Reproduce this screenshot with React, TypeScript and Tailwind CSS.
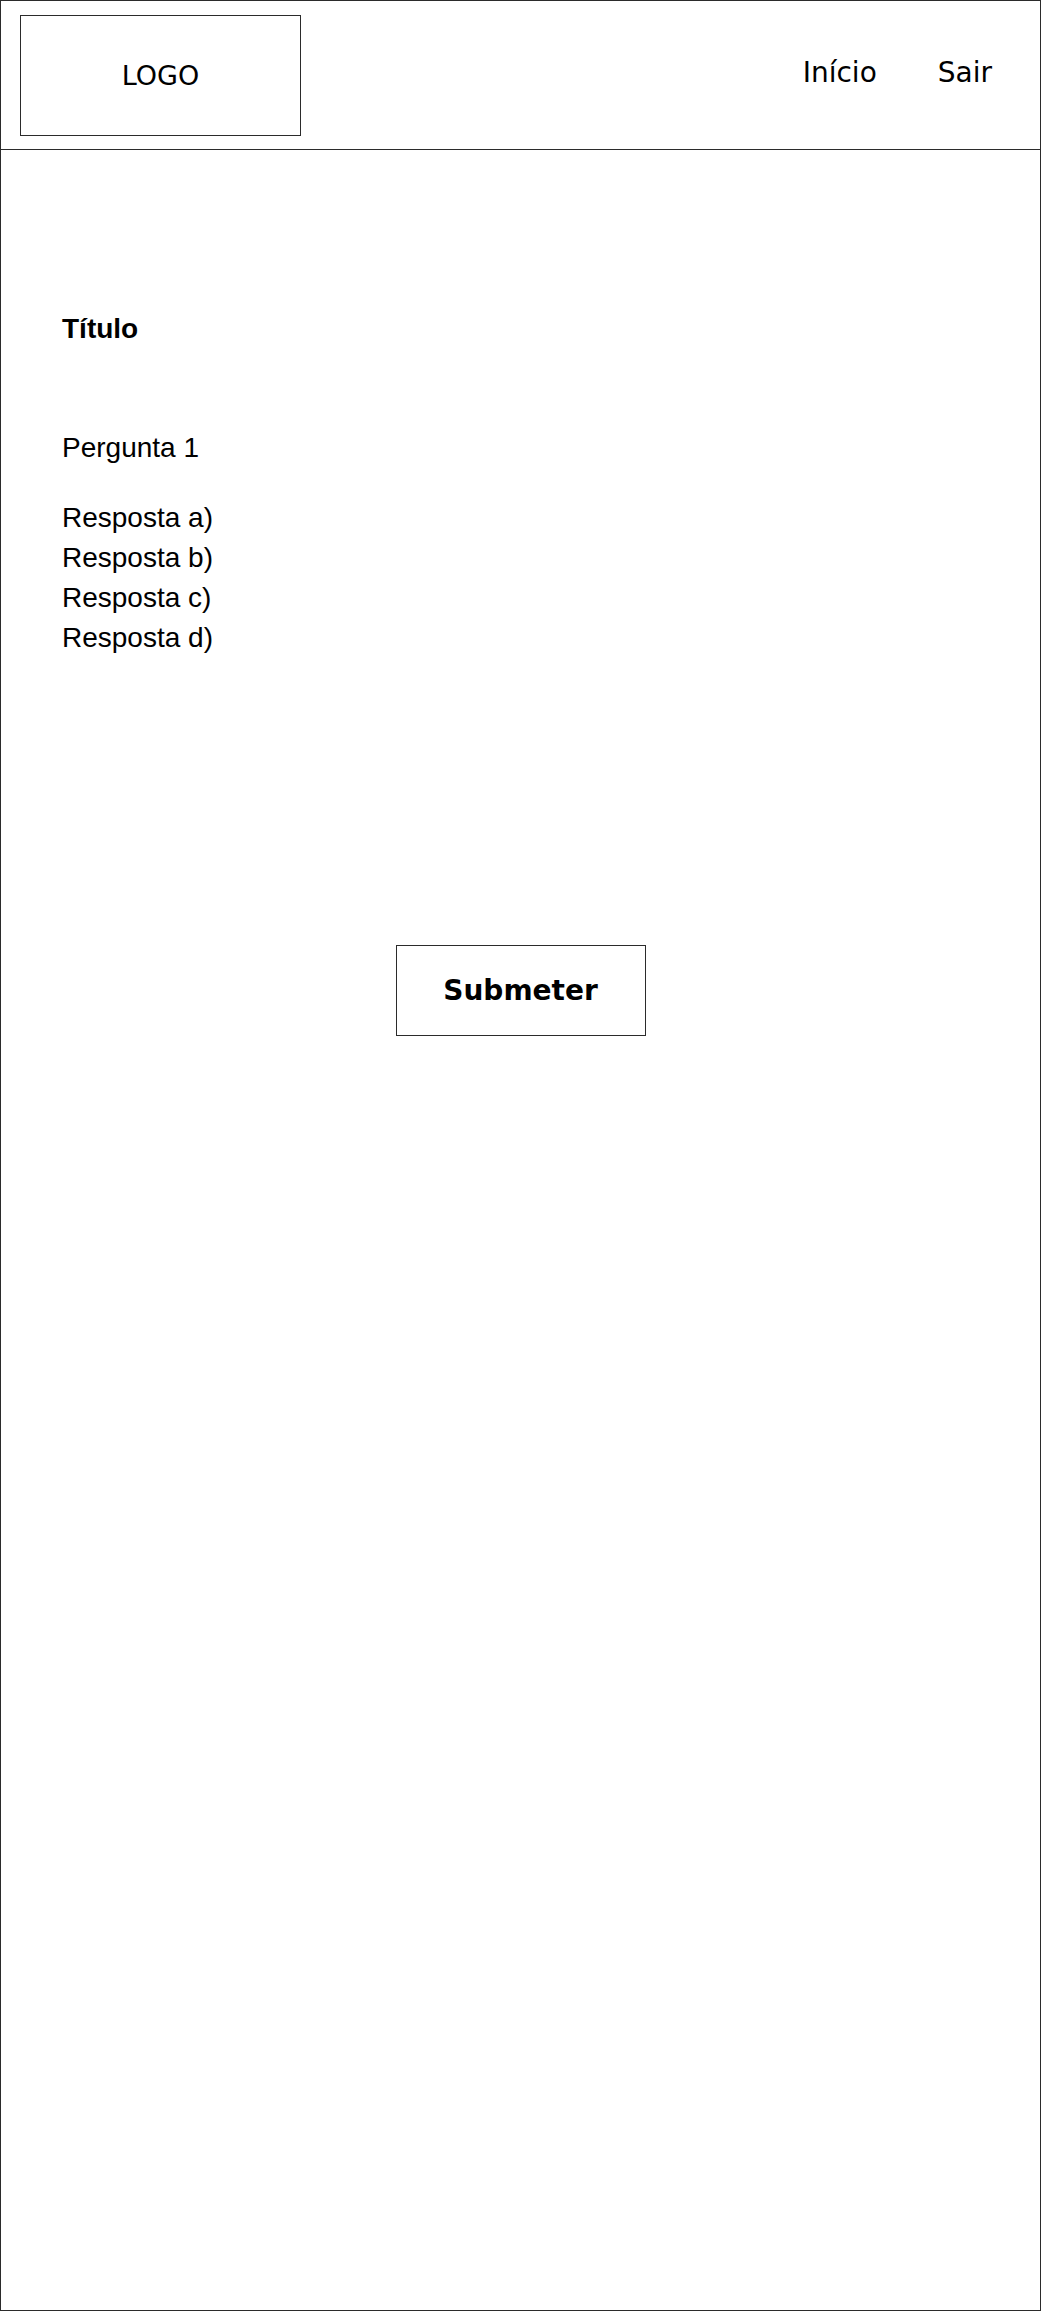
import React from "react";

const respostas = ["Resposta a)", "Resposta b)", "Resposta c)", "Resposta d)"];

export default function App() {
  return (
    <div className="w-[1041px] h-[2311px] border border-[#2b2b2b] bg-white text-black">
      {/* header */}
      <div className="flex items-start h-[149px] border-b border-[#2b2b2b]">
        <div className="ml-[19px] mt-[14px] w-[281px] h-[121px] border border-[#2b2b2b] flex items-center justify-center font-['DejaVu_Sans',sans-serif] text-[27px] leading-none">
          LOGO
        </div>
        <nav className="ml-auto mr-[48px] mt-[56px] flex gap-[61px] font-['DejaVu_Sans',sans-serif] text-[28px] leading-[32px]">
          <span>Início</span>
          <span>Sair</span>
        </nav>
      </div>

      {/* conteudo */}
      <div className="pl-[61px] pt-[159px] font-['Liberation_Sans',Arial,sans-serif] text-[28px] leading-[40px]">
        <h1 className="font-bold">Título</h1>
        <p className="mt-[79px]">Pergunta 1</p>
        <ul className="mt-[30px]">
          {respostas.map((r) => (
            <li key={r}>{r}</li>
          ))}
        </ul>
      </div>

      <div className="flex justify-center mt-[287px]">
        <button className="w-[250px] h-[91px] border border-[#2b2b2b] bg-white font-['DejaVu_Sans',sans-serif] font-bold text-[28px] leading-none">
          Submeter
        </button>
      </div>
    </div>
  );
}
